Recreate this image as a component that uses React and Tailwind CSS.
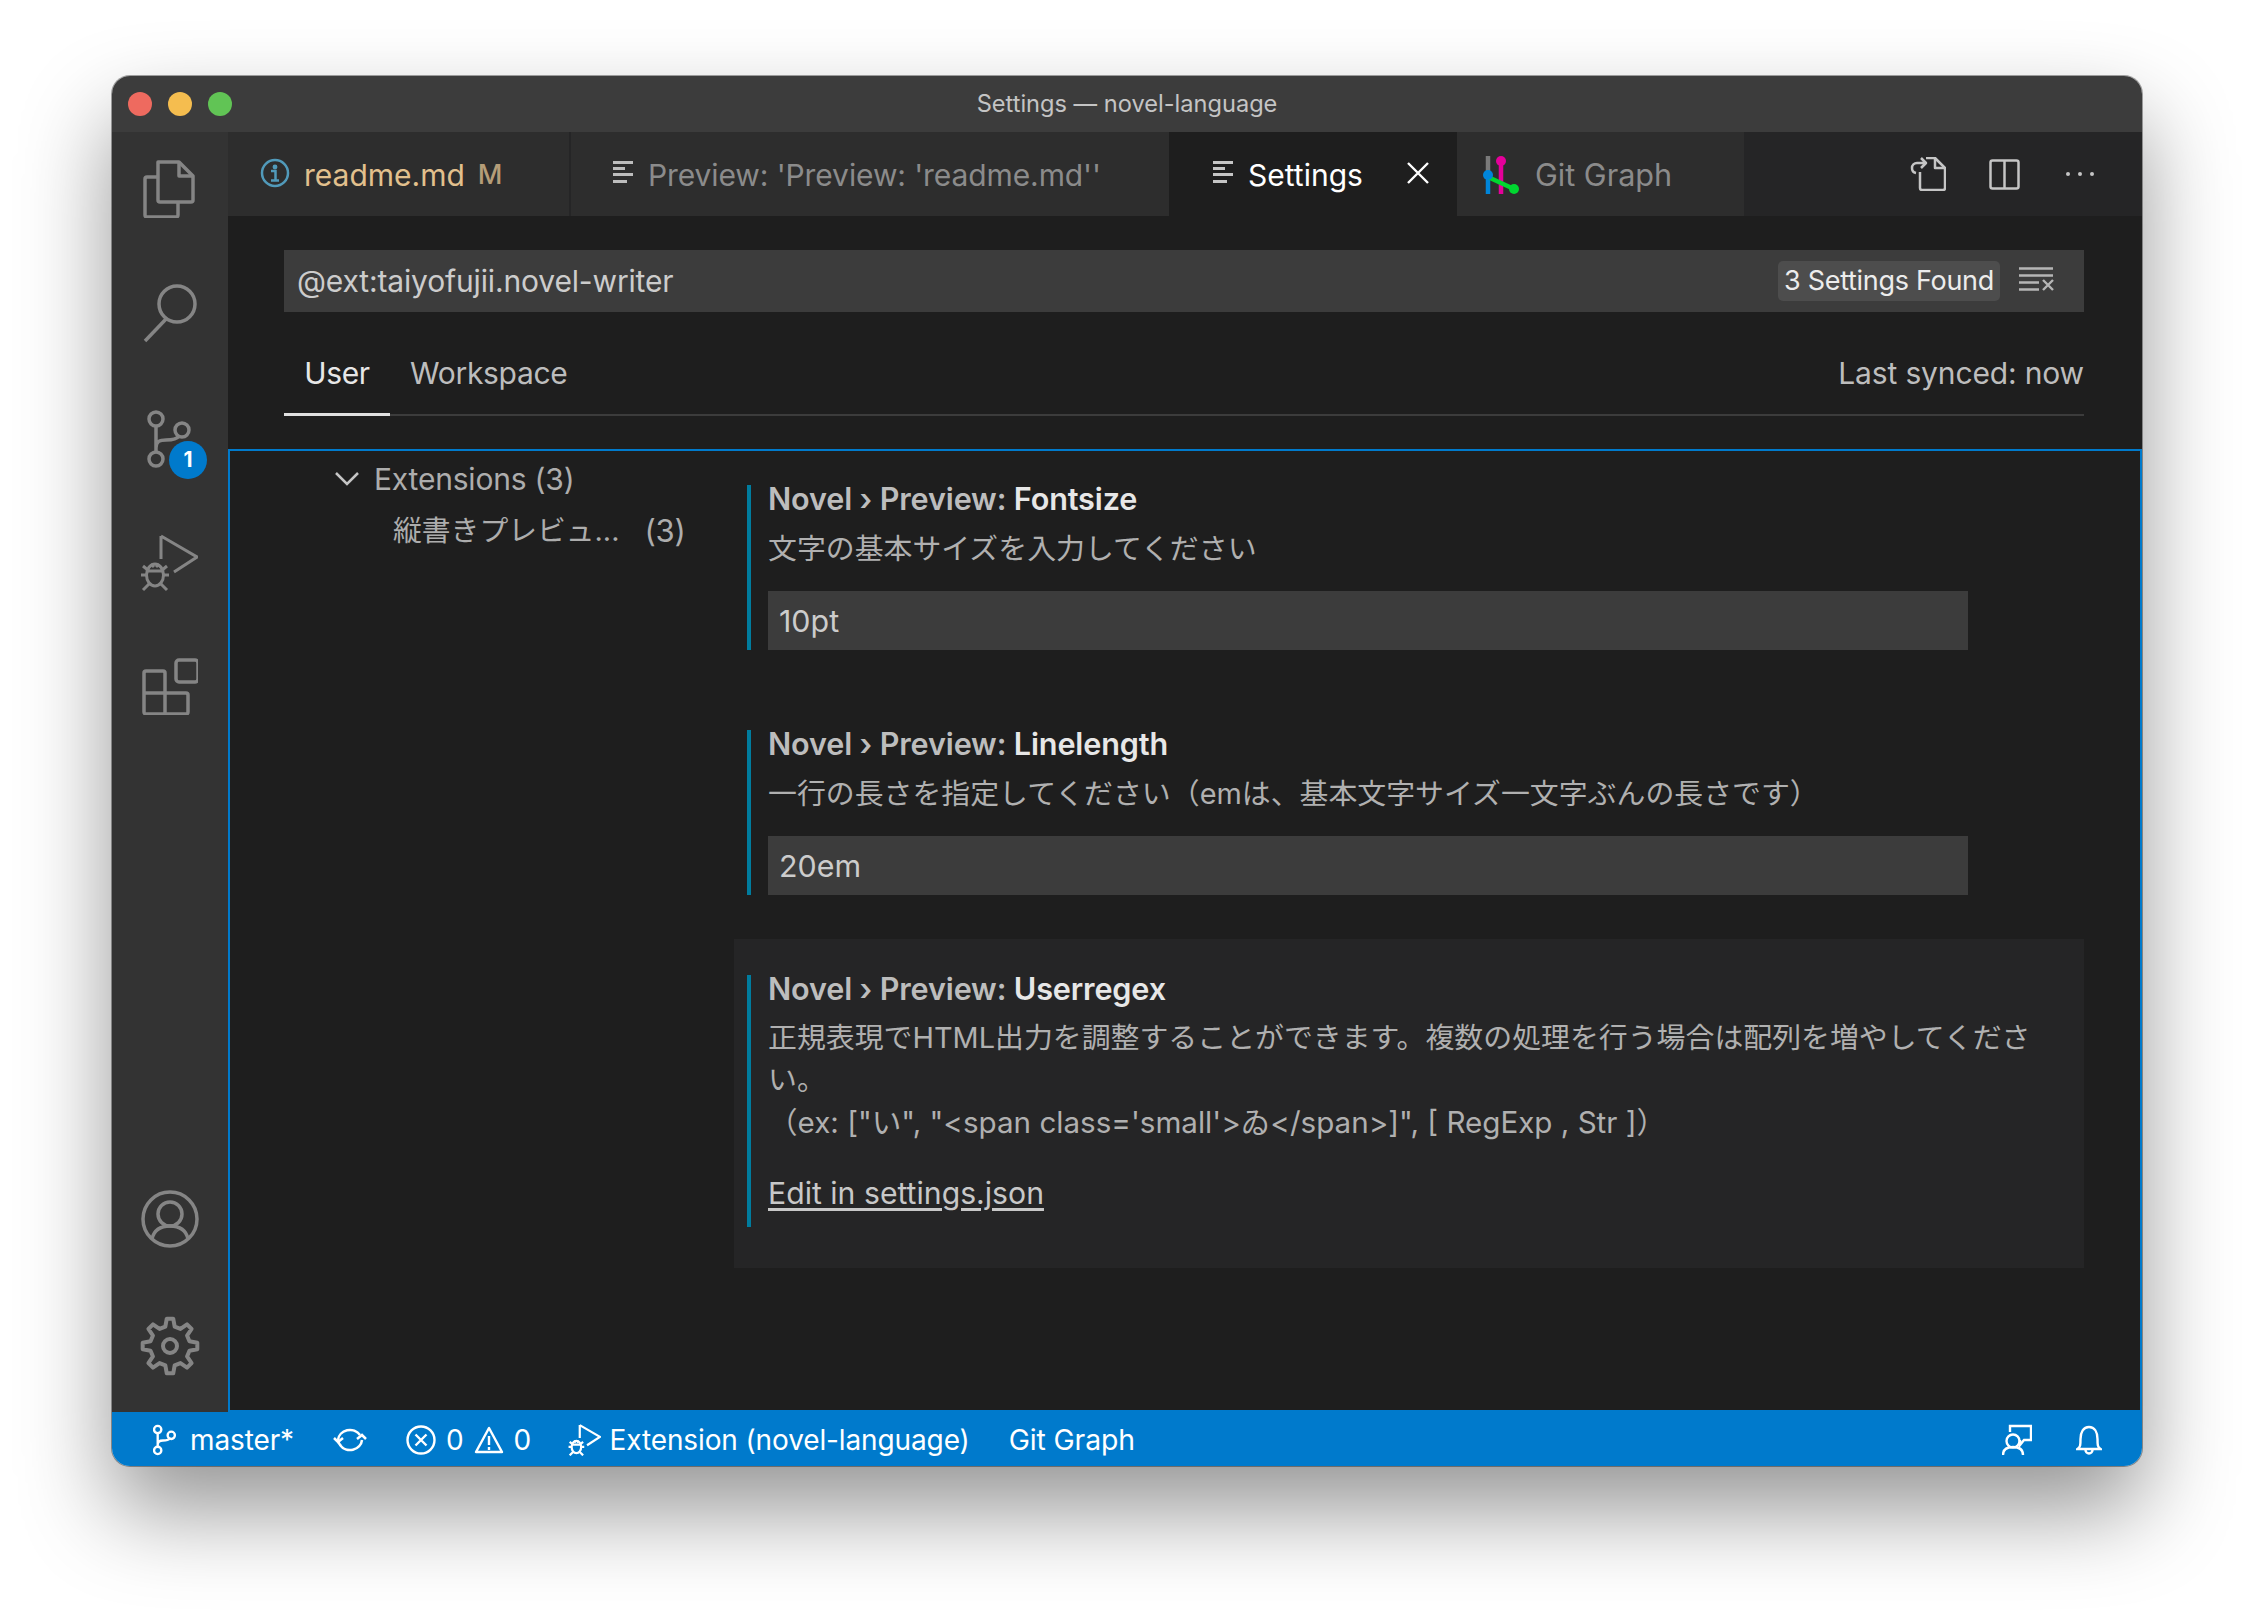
import React from "react";

const gearPoints = (() => {
  const pts = [];
  const teeth = 8;
  for (let i = 0; i < teeth; i++) {
    const a = (i * 2 * Math.PI) / teeth - Math.PI / 2;
    const step = (2 * Math.PI) / teeth;
    const add = (r, o) => pts.push(`${(30 + r * Math.cos(a + o * step)).toFixed(2)},${(30 + r * Math.sin(a + o * step)).toFixed(2)}`);
    add(20, -0.3);
    add(27.5, -0.15);
    add(27.5, 0.15);
    add(20, 0.3);
  }
  return pts.join(" ");
})();

function Icon({ w, h, className = "", sw = 3.5, children }) {
  return (
    <svg
      width={w}
      height={h}
      viewBox={`0 0 ${w} ${h}`}
      fill="none"
      stroke="currentColor"
      strokeWidth={sw}
      strokeLinejoin="round"
      className={`shrink-0 ${className}`}
    >
      {children}
    </svg>
  );
}

function BugPlay({ scale = 1, sw = 3 }) {
  return (
    <svg width={58 * scale} height={58 * scale} viewBox="0 0 58 58" fill="none" stroke="currentColor" strokeWidth={sw / scale} className="shrink-0">
      <path d="M21 2v23M21 2l36 21-23 15" />
      <ellipse cx="15" cy="41" rx="8.5" ry="11" />
      <path d="M8 37h14M1 41h6M23 41h6M3 32l6 5M27 32l-6 5M3 56l6-6M27 56l-6-6M11 30l3 3M19 30l-3 3" />
    </svg>
  );
}

function BranchIcon({ w, h, sw, r }) {
  return (
    <svg width={w} height={h} viewBox="0 0 46 58" fill="none" stroke="currentColor" strokeWidth={sw} className="shrink-0">
      <circle cx="9" cy="9" r={r} />
      <circle cx="9" cy="49" r={r} />
      <circle cx="35" cy="20" r={r} />
      <path d="M9 16v26M9 38c0-7 4-8 10-8 7 0 11-1 13-4" />
    </svg>
  );
}

function ListIcon({ className = "" }) {
  return (
    <svg width="21" height="22" viewBox="0 0 21 22" className={`shrink-0 ${className}`} fill="currentColor">
      <rect x="0" y="0" width="20" height="3" />
      <rect x="0" y="6" width="12" height="3" />
      <rect x="0" y="12" width="20" height="3" />
      <rect x="0" y="19" width="14" height="3" />
    </svg>
  );
}

function ActivityBar() {
  return (
    <div className="w-[116px] shrink-0 bg-[#333333] text-[#858585] flex flex-col items-center pt-[28px] pb-[36px]">
      <Icon w={52} h={58} className="ml-[-2px]">
        <path d="M15 2h21l14 14v24a2 2 0 0 1-2 2H17a2 2 0 0 1-2-2z" />
        <path d="M36 2v14h14" />
        <path d="M15 17H4a2 2 0 0 0-2 2v36a2 2 0 0 0 2 2h29a2 2 0 0 0 2-2V42" />
      </Icon>
      <Icon w={56} h={60} className="mt-[65px] ml-[2px]">
        <circle cx="34" cy="21" r="18" />
        <path d="M24 35L2 58" />
      </Icon>
      <div className="relative mt-[67px] ml-[10px] w-[56px] h-[59px] flex">
        <BranchIcon w={46} h={58} sw={3.5} r={7} />
        <span className="absolute left-[22px] top-[31px] w-[38px] h-[38px] rounded-full bg-[#007acc] text-white text-[21px] font-bold flex items-center justify-center">1</span>
      </div>
      <div className="mt-[65px] ml-[-2px]">
        <BugPlay />
      </div>
      <Icon w={56} h={57} className="mt-[66px]">
        <rect x="34" y="2" width="22" height="22" rx="3" />
        <path d="M4 13h17a2 2 0 0 1 2 2v41H4a2 2 0 0 1-2-2V15a2 2 0 0 1 2-2zM2 35h42a2 2 0 0 1 2 2v17a2 2 0 0 1-2 2H23" />
      </Icon>
      <div className="flex-1" />
      <Icon w={58} h={58}>
        <circle cx="29" cy="29" r="27" />
        <circle cx="29" cy="24" r="12" />
        <path d="M11 49c2-9 9-13 18-13s16 4 18 13" />
      </Icon>
      <Icon w={60} h={60} className="mt-[68px]" sw={4}>
        <polygon points={gearPoints} />
        <circle cx="30" cy="30" r="7" />
      </Icon>
    </div>
  );
}

function Tab({ children, className = "" }) {
  return <div className={`h-full flex items-center shrink-0 ${className}`}>{children}</div>;
}

function TabBar() {
  return (
    <div className="h-[84px] shrink-0 bg-[#252526] flex text-[#8b8b8b] text-[30px]">
      <Tab className="w-[343px] bg-[#2d2d2d] border-r-2 border-[#252526] pl-[32px]">
        <svg width="30" height="30" viewBox="0 0 30 30" fill="none" stroke="#519aba" strokeWidth="2.5" className="shrink-0 mb-[2px]">
          <circle cx="15" cy="15" r="13" />
          <circle cx="15" cy="9" r="1.2" fill="#519aba" />
          <path d="M11 13h4.5v9M11 22.5h8" />
        </svg>
        <span className="ml-[14px] mt-[2px] text-[#e2c08d]">readme.md</span>
        <span className="ml-[13px] mt-[2px] text-[#b59d78] font-medium text-[27px]">M</span>
      </Tab>
      <Tab className="w-[598px] bg-[#2d2d2d] pl-[42px]">
        <ListIcon className="mb-[4px] text-[#bdbdbd]" />
        <span className="ml-[14px] mt-[2px] tracking-[-0.1px]">Preview: 'Preview: 'readme.md''</span>
      </Tab>
      <Tab className="w-[288px] bg-[#1e1e1e] pl-[44px] text-white">
        <ListIcon className="mb-[4px] text-[#c5c5c5]" />
        <span className="ml-[14px] mt-[2px]">Settings</span>
        <svg width="22" height="22" viewBox="0 0 22 22" stroke="currentColor" strokeWidth="2.4" className="ml-[44px] mb-[2px] shrink-0">
          <path d="M1 1l20 20M21 1L1 21" />
        </svg>
      </Tab>
      <Tab className="w-[287px] bg-[#2d2d2d] pl-[26px]">
        <svg width="38" height="38" viewBox="0 0 38 38" fill="none" strokeWidth="4.5" className="shrink-0 mt-[2px]">
          <path d="M5 0v15" stroke="#7a7a7a" />
          <path d="M5 19v19" stroke="#0085d9" />
          <path d="M18 5v33" stroke="#e5009a" />
          <path d="M5 21l26 12" stroke="#00d630" />
          <circle cx="5" cy="19" r="5" fill="#0085d9" stroke="none" />
          <circle cx="18" cy="5" r="5" fill="#e5009a" stroke="none" />
          <circle cx="31" cy="33" r="5" fill="#00d630" stroke="none" />
        </svg>
        <span className="ml-[14px] mt-[2px] text-[30.6px]">Git Graph</span>
      </Tab>
      <div className="flex-1 flex items-center justify-end pr-[48px] text-[#c5c5c5]">
        <Icon w={36} h={34} sw={2.5}>
          <path d="M16 1h9l10 10v20a2 2 0 0 1-2 2H12a2 2 0 0 1-2-2V15" />
          <path d="M25 1v10h10" />
          <path d="M11 1l5 5-5 5M16 6H7a5 5 0 0 0-5 5 5 5 0 0 0 4 5" />
        </Icon>
        <Icon w={31} h={31} sw={2.5} className="ml-[43px]">
          <rect x="1.5" y="1.5" width="28" height="28" rx="2" />
          <path d="M15.5 1.5v28" />
        </Icon>
        <div className="ml-[46px] w-[28px] flex justify-between">
          <span className="w-[4px] h-[4px] rounded-full bg-current" />
          <span className="w-[4px] h-[4px] rounded-full bg-current" />
          <span className="w-[4px] h-[4px] rounded-full bg-current" />
        </div>
      </div>
    </div>
  );
}

function SettingHead({ label }) {
  return (
    <div className="h-[28px] leading-[28px] text-[30.6px] tracking-[-0.15px] font-semibold text-[#bdbdbd] whitespace-nowrap">
      Novel › Preview: <span className="text-[#e7e7e7]">{label}</span>
    </div>
  );
}

function InputSetting({ label, desc, value, top = "pt-[35px]" }) {
  return (
    <div className={`${top} pb-[35px] pl-[13px]`}>
      <div className="border-l-[4px] border-[#007c9e] pl-[17px] h-[165px]">
        <SettingHead label={label} />
        <div className="mt-[15px] h-[42px] leading-[42px] text-[28.9px] text-[#b0b0b0] whitespace-nowrap">{desc}</div>
        <div className="mt-[21px] w-[1200px] h-[59px] bg-[#3c3c3c] pl-[11px] pt-[2px] flex items-center text-[30.4px] text-[#cccccc]">{value}</div>
      </div>
    </div>
  );
}

function SettingsPane() {
  return (
    <div className="flex-1 bg-[#1e1e1e] flex flex-col min-h-0">
      <div className="pt-[34px] pl-[56px] pr-[58px] h-[233px] shrink-0">
        <div className="h-[62px] bg-[#3c3c3c] flex items-center pl-[13px] pr-[30px]">
          <span className="text-[30px] tracking-[-0.15px] text-[#cccccc]">@ext:taiyofujii.novel-writer</span>
          <span className="ml-auto h-[40px] w-[222px] rounded-[5px] bg-[#4d4d4d] flex items-center justify-center text-[27px] tracking-[-0.3px] text-[#ececec]">3 Settings Found</span>
          <svg width="35" height="24" viewBox="0 0 35 24" stroke="#b5b5b5" strokeWidth="2.4" fill="none" className="ml-[19px] mb-[4px] shrink-0">
            <path d="M0 1.5h34M0 8.5h34M0 15.5h20M0 22.5h20M24 13l10 10M34 13L24 23" />
          </svg>
        </div>
        <div className="h-[104px] border-b-2 border-[#3c3c3c] flex text-[30px] tracking-[-0.3px] text-[#bdbdbd]">
          <div className="w-[106px] h-[104px] mb-[-2px] border-b-[3px] border-[#e0e0e0] flex items-center justify-center pt-[21px] text-[#e7e7e7]">User</div>
          <div className="ml-[20px] flex items-center pt-[21px]">Workspace</div>
          <div className="ml-auto flex items-center pt-[21px] tracking-[-0.15px]">Last synced: now</div>
        </div>
      </div>
      <div className="flex-1 border-2 border-[#007acc] flex min-h-0">
        <div className="w-[504px] shrink-0 pt-[8px] text-[30px] tracking-[-0.2px] text-[#adadad]">
          <div className="flex items-center h-[40px] pl-[105px]">
            <svg width="24" height="14" viewBox="0 0 24 14" fill="none" stroke="#c5c5c5" strokeWidth="2.5" className="shrink-0">
              <path d="M1 1l11 11L23 1" />
            </svg>
            <span className="ml-[15px]">Extensions (3)</span>
          </div>
          <div className="flex items-center h-[40px] mt-[12px] pl-[163px] whitespace-nowrap">
            <span className="text-[28.8px] tracking-[0px]">縦書きプレビュ...</span>
            <span className="ml-[25px] text-[31px]">(3)</span>
          </div>
        </div>
        <div className="flex-1 pr-[56px] flex flex-col gap-[9px]">
          <InputSetting label="Fontsize" desc="文字の基本サイズを入力してください" value="10pt" top="pt-[34px]" />
          <InputSetting label="Linelength" desc="一行の長さを指定してください（emは、基本文字サイズ一文字ぶんの長さです）" value="20em" top="pt-[36px]" />
          <div className="bg-[#252526] pt-[36px] pb-[41px] pl-[13px]">
            <div className="border-l-[4px] border-[#007c9e] pl-[17px] h-[252px]">
              <SettingHead label="Userregex" />
              <div className="mt-[14px] leading-[42px] text-[28.9px] text-[#b0b0b0] whitespace-nowrap">
                <div>正規表現でHTML出力を調整することができます。複数の処理を行う場合は配列を増やしてくださ</div>
                <div>い。</div>
                <div className="text-[29.6px]">（ex: ["い", "&lt;span class='small'&gt;ゐ&lt;/span&gt;]", [ RegExp , Str ]）</div>
              </div>
              <div className="mt-[29px] text-[30.2px] leading-[42px] text-[#c8c8c8] underline underline-offset-[4px]">Edit in settings.json</div>
            </div>
          </div>
        </div>
      </div>
    </div>
  );
}

function StatusBar() {
  return (
    <div className="h-[54px] shrink-0 bg-[#007acc] text-white text-[28px] tracking-[-0.12px] flex items-center pt-[2px] pl-[41px] pr-[40px] whitespace-nowrap">
      <BranchIcon w={24} h={32} sw={4.5} r={7} />
      <span className="ml-[13px]">master*</span>
      <svg width="34" height="26" viewBox="0 0 34 26" fill="none" stroke="currentColor" strokeWidth="2.5" className="ml-[39px] shrink-0">
        <path d="M5 13a12 11 0 0 1 22-5M5 13a12 11 0 0 0 3 6M29 13a12 11 0 0 1-22 5" />
        <path d="M1 10l4 4 5-4M24 11l5-4 4 4" transform="translate(0 1)" />
      </svg>
      <svg width="30" height="30" viewBox="0 0 30 30" fill="none" stroke="currentColor" strokeWidth="2.4" className="ml-[39px] shrink-0">
        <circle cx="15" cy="15" r="13.5" />
        <path d="M9.5 9.5l11 11M20.5 9.5l-11 11" />
      </svg>
      <span className="ml-[10px]">0</span>
      <svg width="30" height="28" viewBox="0 0 30 28" fill="none" stroke="currentColor" strokeWidth="2.4" strokeLinejoin="round" className="ml-[10px] shrink-0">
        <path d="M15 2L2 26h26z" />
        <path d="M15 10v9M15 21v3" />
      </svg>
      <span className="ml-[10px]">0</span>
      <div className="ml-[37px]">
        <BugPlay scale={0.56} sw={2.2} />
      </div>
      <span className="ml-[9px]">Extension (novel-language)</span>
      <span className="ml-[39px] text-[28.4px]">Git Graph</span>
      <div className="flex-1" />
      <svg width="30" height="32" viewBox="0 0 30 32" fill="none" stroke="currentColor" strokeWidth="2.4" className="shrink-0">
        <path d="M8 8V2h21v14h-7l-4 5v-5" />
        <circle cx="11" cy="17" r="6.5" />
        <path d="M1 31c0-6 4-8 10-8s10 2 10 8" />
      </svg>
      <svg width="26" height="30" viewBox="0 0 26 30" fill="none" stroke="currentColor" strokeWidth="2.4" className="ml-[44px] shrink-0">
        <path d="M1.5 24c3-2 3-4 3-10 0-7 3-12 8.5-12s8.5 5 8.5 12c0 6 0 8 3 10z" />
        <path d="M9.5 25a3.5 3.5 0 0 0 7 0" />
      </svg>
    </div>
  );
}

export default function App() {
  return (
    <div className="w-[2254px] h-[1614px] bg-white pt-[76px] pl-[112px] overflow-hidden font-['Inter','Noto_Sans_CJK_JP',sans-serif]">
      <div className="w-[2030px] h-[1390px] rounded-[18px] overflow-hidden flex flex-col shadow-[0_0_0_1px_rgba(0,0,0,0.35),0_44px_90px_rgba(0,0,0,0.42)]">
        <div className="relative h-[56px] shrink-0 bg-[#3c3c3c] flex items-center justify-center text-[23.6px] text-[#c4c4c4]">
          <div className="absolute left-[16px] top-[16px] flex gap-[16px]">
            <span className="w-[24px] h-[24px] rounded-full bg-[#ee6a5f]" />
            <span className="w-[24px] h-[24px] rounded-full bg-[#f5bd4f]" />
            <span className="w-[24px] h-[24px] rounded-full bg-[#61c455]" />
          </div>
          Settings — novel-language
        </div>
        <div className="flex-1 flex min-h-0">
          <ActivityBar />
          <div className="flex-1 flex flex-col min-w-0">
            <TabBar />
            <SettingsPane />
          </div>
        </div>
        <StatusBar />
      </div>
    </div>
  );
}
